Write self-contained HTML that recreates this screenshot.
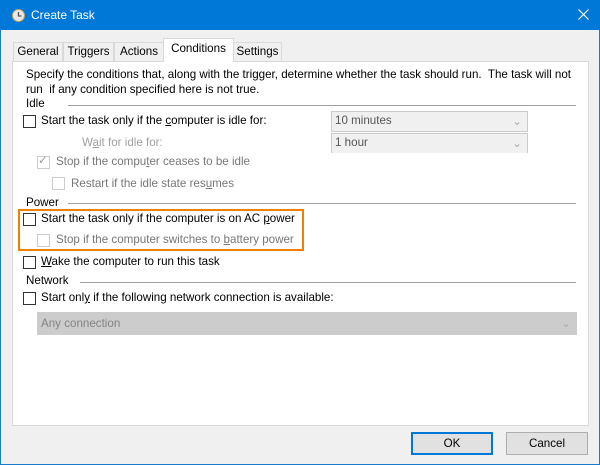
<!DOCTYPE html>
<html><head><style>
*{margin:0;padding:0;box-sizing:border-box}
body{width:600px;height:465px;overflow:hidden;background:#f0f0f0;font-family:"Liberation Sans",sans-serif;font-size:11.6px;color:#000;position:relative}
.a{position:absolute;white-space:nowrap}
.win{position:absolute;left:0;top:0;width:600px;height:465px;border:1px solid #1979ca;border-top:none}
.title{position:absolute;left:0;top:0;width:600px;height:30px;background:#0078d7;color:#fff;font-size:12px}
.tab{position:absolute;top:42px;height:20px;border:1px solid #d9d9d9;border-bottom:none;background:#f0f0f0;text-align:center;line-height:18px}
.panel{position:absolute;left:12px;top:61px;width:577px;height:365px;background:#fff;border:1px solid #d9d9d9}
.cb{position:absolute;width:13px;height:13px;border:1px solid #333;background:#fff}
.cb.d{border-color:#ccc}
.g{color:#a0a0a0}
.line{position:absolute;height:1px;background:#a0a0a0}
.combo{position:absolute;height:21px;border:1px solid #ccc;background:#f0f0f0;color:#555;padding:2px 3px}
.btn{position:absolute;top:432px;height:23px;border:1px solid #adadad;background:#e1e1e1;text-align:center;line-height:21px}
</style></head><body>
<div class="win"></div>
<div class="title">
<svg class="a" style="left:12px;top:9px" width="13" height="13" viewBox="0 0 13 13"><circle cx="6.5" cy="6.5" r="6" fill="#e8e8e8" stroke="#c8a060"/><path d="M6.5 3v4h3" stroke="#555" fill="none" stroke-width="1.3"/></svg>
<span class="a" style="left:31px;top:8px">Create Task</span>
<svg class="a" style="left:578px;top:9px" width="11" height="11"><path d="M0.5 0.5L10.5 10.5M10.5 0.5L0.5 10.5" stroke="#fff" stroke-width="1.2"/></svg>
</div>
<div class="tab" style="left:13px;width:50px">General</div>
<div class="tab" style="left:63px;width:51px">Triggers</div>
<div class="tab" style="left:114px;width:50px">Actions</div>
<div class="tab" style="left:233px;width:49px">Settings</div>
<div class="panel"></div>
<div class="tab" style="left:163px;top:38px;height:24px;width:71px;background:#fff;line-height:20px">Conditions</div>

<span class="a" style="left:26px;top:68px">Specify the conditions that, along with the trigger, determine whether the task should run.&nbsp; The task will not</span>
<span class="a" style="left:26px;top:83px">run&nbsp; if any condition specified here is not true.</span>
<span class="a" style="left:26px;top:97px">Idle</span><div class="line" style="left:68px;top:105px;width:508px"></div>
<div class="cb" style="left:23px;top:115px"></div><span class="a" style="left:41px;top:114px">Start the task only if the <u>c</u>omputer is idle for:</span>
<div class="combo" style="left:331px;top:111px;width:197px">10 minutes<span class="a" style="right:5px;top:2px;color:#aaa">⌄</span></div>
<span class="a g" style="left:82px;top:136px">W<u>a</u>it for idle for:</span>
<div class="combo" style="left:331px;top:133px;width:197px;height:20px;border-bottom:none">1 hour<span class="a" style="right:5px;top:2px;color:#aaa">⌄</span></div>
<div class="cb d" style="left:37px;top:156px"></div><span class="a g" style="left:38px;top:153px;color:#999">✓</span><span class="a g" style="left:56px;top:155px;color:#777">Stop if the compu<u>t</u>er ceases to be idle</span>
<div class="cb d" style="left:52px;top:177px"></div><span class="a" style="left:71px;top:177px;color:#777">Restart if the idle state res<u>u</u>mes</span>
<span class="a" style="left:26px;top:196px">Power</span><div class="line" style="left:68px;top:203px;width:508px"></div>
<div class="a" style="left:18px;top:209px;width:286px;height:42px;border:2px solid #f08000"></div>
<div class="cb" style="left:23px;top:213px"></div><span class="a" style="left:41px;top:212px">Start the task only if the computer is on AC <u>p</u>ower</span>
<div class="cb d" style="left:37px;top:234px"></div><span class="a" style="left:56px;top:233px;color:#777">Stop if the computer switches to <u>b</u>attery power</span>
<div class="cb" style="left:23px;top:256px"></div><span class="a" style="left:41px;top:255px"><u>W</u>ake the computer to run this task</span>
<span class="a" style="left:26px;top:274px">Network</span><div class="line" style="left:80px;top:282px;width:496px"></div>
<div class="cb" style="left:23px;top:292px"></div><span class="a" style="left:41px;top:291px">Start onl<u>y</u> if the following network connection is available:</span>
<div class="combo" style="left:37px;top:312px;width:540px;height:23px;background:#cccccc;border-color:#ccc;color:#838383;padding-top:4px">Any connection<span class="a" style="right:5px;top:3px;color:#aaa">⌄</span></div>
<div class="btn" style="left:411px;width:82px;border:2px solid #0078d7;line-height:19px">OK</div>
<div class="btn" style="left:506px;width:82px">Cancel</div>
</body></html>
